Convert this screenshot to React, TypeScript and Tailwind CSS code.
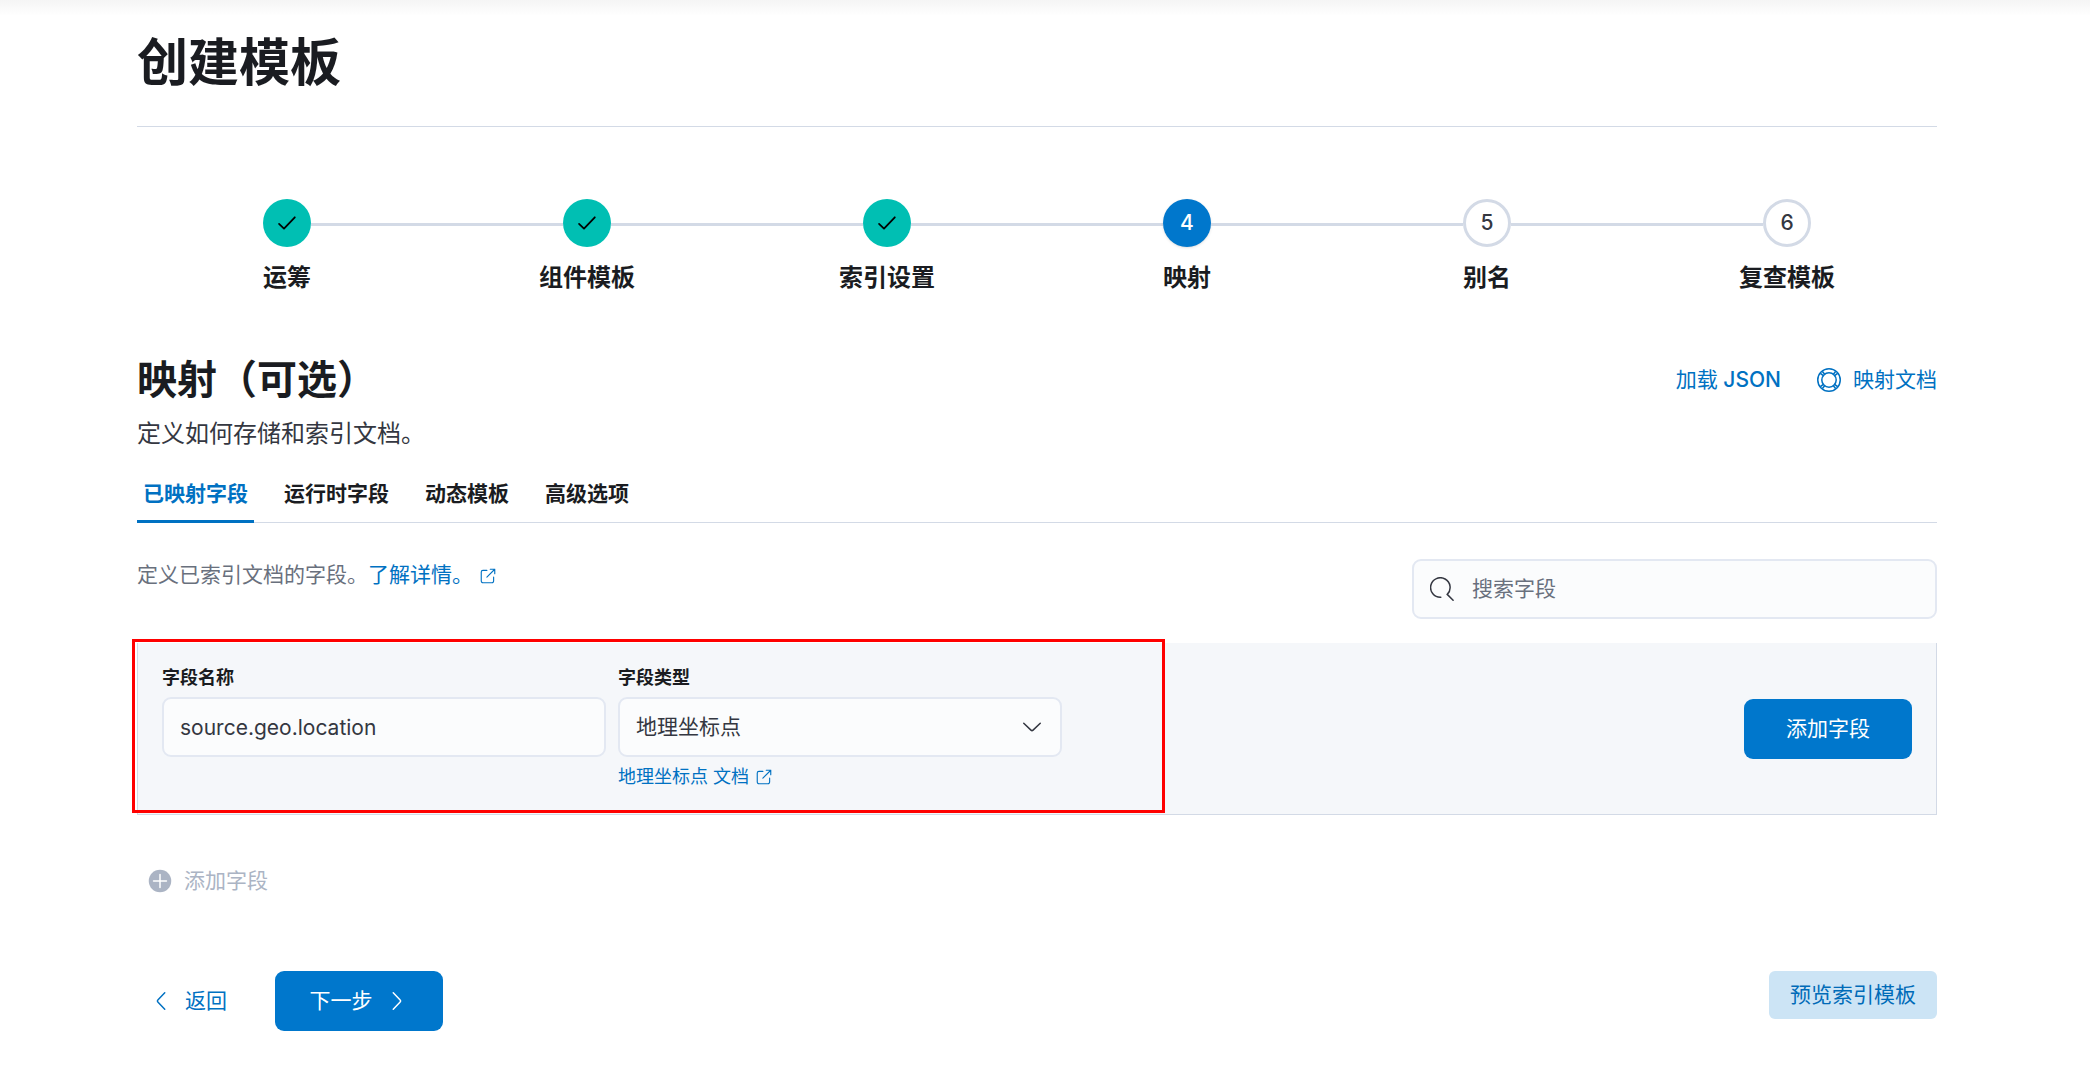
import React from "react";

const steps = [
  { n: 1, title: "运筹", state: "complete" },
  { n: 2, title: "组件模板", state: "complete" },
  { n: 3, title: "索引设置", state: "complete" },
  { n: 4, title: "映射", state: "current" },
  { n: 5, title: "别名", state: "incomplete" },
  { n: 6, title: "复查模板", state: "incomplete" },
];

const tabs = ["已映射字段", "运行时字段", "动态模板", "高级选项"];

const circleStyles: Record<string, string> = {
  complete: "bg-[#00bfb3] text-black",
  current: "bg-[#0077cc] text-white shadow-sm",
  incomplete: "bg-white border-3 border-[#d3dae6] text-[#343741]",
};

type IconProps = { className?: string };

function Check() {
  return (
    <svg viewBox="0 0 16 16" className="size-6" fill="none" stroke="currentColor" strokeWidth="1.2" strokeLinecap="round" strokeLinejoin="round" aria-hidden="true">
      <path d="M2.700 8.600 6 11.700l7.200-7.500" />
    </svg>
  );
}

function External({ className = "" }: IconProps) {
  return (
    <svg viewBox="0 0 16 16" className={className} fill="none" stroke="currentColor" strokeLinecap="round" strokeLinejoin="round" aria-hidden="true">
      <path d="M7 3H3.500A1.500 1.500 0 0 0 2 4.500v8A1.500 1.500 0 0 0 3.500 14h8a1.500 1.500 0 0 0 1.500-1.500V9M10 2h4v4M14 2 7 9" />
    </svg>
  );
}

function Help() {
  return (
    <svg viewBox="0 0 16 16" className="size-6" fill="none" stroke="currentColor" aria-hidden="true">
      <circle cx="8" cy="8" r="7.500" />
      <circle cx="8" cy="8" r="4.800" />
      <path d="M2.300 3.600 4.200 5.100M3.600 2.300 5.100 4.200M13.700 3.600 11.800 5.100M12.400 2.300 10.900 4.200M2.300 12.400 4.200 10.900M3.600 13.700 5.100 11.800M13.700 12.400 11.800 10.900M12.400 13.700 10.900 11.800" />
    </svg>
  );
}

function Search() {
  return (
    <svg viewBox="0 0 16 16" className="size-6" fill="none" stroke="currentColor" strokeLinecap="round" aria-hidden="true">
      <path d="M7.200 13.500A6.500 6.500 0 1 1 11.500 11.600L15.400 15.500" />
    </svg>
  );
}

function Chevron({ className = "" }: IconProps) {
  return (
    <svg viewBox="0 0 16 16" className={className} fill="none" stroke="currentColor" strokeLinecap="round" strokeLinejoin="round" aria-hidden="true">
      <path d="m5.500 2.500 4.600 4.800a1 1 0 0 1 0 1.400L5.500 13.500" />
    </svg>
  );
}

function PlusCircle() {
  return (
    <svg viewBox="0 0 16 16" className="size-6" aria-hidden="true">
      <circle cx="8" cy="8" r="7.500" fill="currentColor" />
      <path d="M8 3.700v8.600M3.700 8h8.600" stroke="#fff" strokeLinecap="round" />
    </svg>
  );
}

export default function App() {
  return (
    <div className="bg-white pr-4 pb-12 font-['Inter','Noto_Sans_CJK_SC',sans-serif] text-[21px] leading-8 text-[#343741]">
      <div className="-mr-4 h-4 bg-linear-to-b from-[#f5f5f5] to-white" />
      <div className="mx-auto max-w-[1800px]">
        <header className="border-b border-[#d3dae6] pt-4 pb-8">
          <h1 className="text-[51px] leading-[62px] font-bold text-[#1a1c21]">创建模板</h1>
        </header>

        <ol className="mt-[72px] grid grid-cols-6">
          {steps.map((s, i) => (
            <li key={s.n}>
              <button type="button" className="flex w-full flex-col items-center gap-3">
                <span className="flex w-full items-center">
                  <span className={i === 0 ? "mt-0.5 h-[3px] flex-1" : "mt-0.5 h-[3px] flex-1 bg-[#d3dae6]"} />
                  <span className={`flex size-12 items-center justify-center rounded-full font-medium ${circleStyles[s.state]}`}>
                    {s.state === "complete" ? <Check /> : s.n}
                  </span>
                  <span className={i === steps.length - 1 ? "mt-0.5 h-[3px] flex-1" : "mt-0.5 h-[3px] flex-1 bg-[#d3dae6]"} />
                </span>
                <span className="text-2xl leading-[38px] font-bold text-[#1a1c21]">{s.title}</span>
              </button>
            </li>
          ))}
        </ol>

        <div className="mt-[59px] flex items-start justify-between">
          <div>
            <h2 className="text-[40px] leading-12 font-bold text-[#1a1c21]">映射（可选）</h2>
            <p className="mt-3 text-2xl leading-9">定义如何存储和索引文档。</p>
          </div>
          <div className="flex gap-9 pt-2 font-medium text-[#0071c2]">
            <button type="button"><span className="font-normal">加载</span> JSON</button>
            <a href="#docs" className="flex items-center gap-3 font-normal"><Help />映射文档</a>
          </div>
        </div>

        <div role="tablist" className="mt-3 flex gap-6 border-b border-[#d3dae6]">
          {tabs.map((t, i) => (
            <button
              key={t}
              type="button"
              role="tab"
              aria-selected={i === 0}
              className={i === 0 ? "-mb-px border-b-3 border-[#0071c2] px-1.5 pt-3.5 pb-2.5 font-bold text-[#0071c2]" : "-mb-px border-b-3 border-transparent px-1.5 pt-3.5 pb-2.5 font-bold text-[#1a1c21]"}
            >
              {t}
            </button>
          ))}
        </div>

        <div className="mt-9 flex items-start justify-between">
          <p className="text-[#69707d]">
            定义已索引文档的字段。
            <a href="#learn" className="text-[#0071c2]">
              了解详情。
              <External className="ml-1.5 inline size-[18px]" />
            </a>
          </p>
          <label className="flex h-15 w-[525px] items-center gap-[18px] rounded-[9px] border-2 border-[#e3e8f2] bg-[#fbfcfd] px-4">
            <Search />
            <input type="search" aria-label="搜索字段" placeholder="搜索字段" className="min-w-0 flex-1 bg-transparent outline-none placeholder:text-[#69707d]" />
          </label>
        </div>

        <form className="relative mt-6 flex items-start justify-between border-x border-b border-[#d3dae6] bg-[#f5f7fa] px-6 pt-5 pb-6">
          <div className="flex gap-3">
            <div className="w-[444px]">
              <label htmlFor="field-name" className="block pb-1 text-lg leading-[30px] font-bold text-[#1a1c21]">字段名称</label>
              <input id="field-name" defaultValue="source.geo.location" className="h-15 w-full rounded-[9px] border-2 border-[#e3e8f2] bg-[#fbfcfd] px-4 outline-none" />
            </div>
            <div className="w-[444px]">
              <label htmlFor="field-type" className="block pb-1 text-lg leading-[30px] font-bold text-[#1a1c21]">字段类型</label>
              <div className="relative">
                <select id="field-type" className="h-15 w-full appearance-none rounded-[9px] border-2 border-[#e3e8f2] bg-[#fbfcfd] px-4 outline-none">
                  <option>地理坐标点</option>
                </select>
                <Chevron className="pointer-events-none absolute top-[18px] right-[18px] size-6 rotate-90" />
              </div>
              <a href="#type-docs" className="mt-1.5 flex items-center gap-1.5 text-lg leading-[27px] text-[#0071c2]">
                地理坐标点 文档
                <External className="size-[18px]" />
              </a>
            </div>
          </div>
          <button type="button" className="mt-9 h-15 w-[168px] rounded-[9px] bg-[#0077cc] text-white">添加字段</button>
          <div className="pointer-events-none absolute -top-1 -left-1.5 h-[174px] w-[1033px] border-3 border-[#ff0000]" />
        </form>

        <button type="button" disabled className="mt-[50px] ml-[11px] flex items-center gap-3 text-[#abb4c4]">
          <PlusCircle />
          添加字段
        </button>

        <div className="mt-[74px] flex items-start justify-between">
          <div className="flex items-center gap-12">
            <button type="button" className="ml-3 flex items-center gap-3 text-[#0071c2]">
              <Chevron className="size-6 rotate-180" />
              返回
            </button>
            <button type="button" className="flex h-15 w-[168px] items-center justify-center gap-3 rounded-[9px] bg-[#0077cc] text-white">
              下一步
              <Chevron className="size-6" />
            </button>
          </div>
          <button type="button" className="h-12 w-[168px] rounded-md bg-[#cce4f5] text-[#006bb8]">预览索引模板</button>
        </div>
      </div>
    </div>
  );
}
